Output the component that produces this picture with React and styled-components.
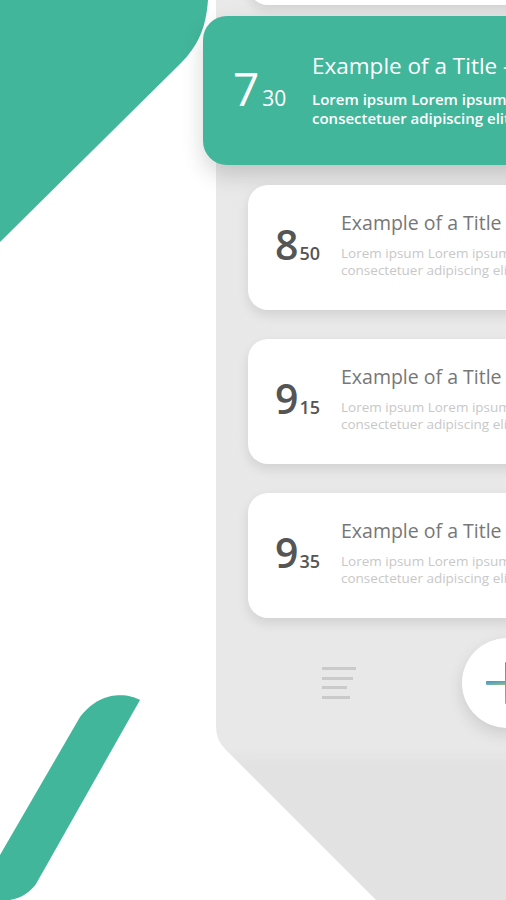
import React from 'react';
import styled, { createGlobalStyle } from 'styled-components';

const GlobalStyle = createGlobalStyle`
  html, body {
    margin: 0;
    padding: 0;
    background: #ffffff;
  }
  body {
    font-family: "Open Sans", "Liberation Sans", sans-serif;
  }
`;

const Screen = styled.div`
  position: relative;
  width: 506px;
  height: 900px;
  overflow: hidden;
  background: #ffffff;
  display: flex;
`;

const Decor = styled.svg`
  position: absolute;
  left: 0;
  top: 0;
  pointer-events: none;
`;

const Panel = styled.div`
  position: relative;
  margin-left: 216px;
  width: 420px;
  height: 900px;
  flex-shrink: 0;
  padding-left: 32px;
  box-sizing: border-box;
  display: flex;
  flex-direction: column;

  &::before {
    content: '';
    position: absolute;
    inset: 0;
    background: linear-gradient(to bottom, #e9e9e9 0, #e8e8e8 748px, #e2e2e2 766px);
    clip-path: path('M0 0 H420 V900 H160 L9 749 Q0 740 0 726 Z');
  }
`;

const List = styled.div`
  position: relative;
  display: flex;
  flex-direction: column;
  gap: 29px;
  margin-top: -120px;
`;

const Card = styled.div`
  flex-shrink: 0;
  box-sizing: border-box;
  display: flex;
  align-items: center;
  height: ${(p) => (p.$active ? 149 : 125)}px;
  margin: ${(p) => (p.$active ? '-18px 0 -9px -45px' : '0')};
  padding: 0 0 6px ${(p) => (p.$active ? 30 : 27)}px;
  border-radius: ${(p) => (p.$active ? 24 : 20)}px;
  background: ${(p) => (p.$active ? '#42b69b' : '#ffffff')};
  box-shadow: ${(p) =>
    p.$active
      ? '0 10px 22px rgba(0, 0, 0, 0.16)'
      : '0 5px 12px rgba(0, 0, 0, 0.1)'};
  white-space: nowrap;
  overflow: hidden;
`;

const Time = styled.div`
  flex-shrink: 0;
  width: ${(p) => (p.$active ? 79 : 66)}px;
  display: flex;
  align-items: baseline;
  color: ${(p) => (p.$active ? '#ffffff' : '#555555')};

  .hour {
    font-size: ${(p) => (p.$active ? 46 : 41)}px;
    font-weight: ${(p) => (p.$active ? 400 : 600)};
    line-height: 1;
  }

  .min {
    margin-left: ${(p) => (p.$active ? 3 : 1)}px;
    font-size: ${(p) => (p.$active ? 21 : 18)}px;
    font-weight: ${(p) => (p.$active ? 400 : 600)};
    line-height: 1;
  }
`;

const Text = styled.div`
  display: flex;
  flex-direction: column;
  padding-top: ${(p) => (p.$active ? 4 : 0)}px;
`;

const Title = styled.div`
  font-size: ${(p) => (p.$active ? 22.5 : 19.5)}px;
  line-height: 1.3;
  color: ${(p) => (p.$active ? '#ffffff' : '#777777')};
`;

const Body = styled.div`
  margin-top: 9px;
  font-size: ${(p) => (p.$active ? 15 : 13.5)}px;
  font-weight: ${(p) => (p.$active ? 600 : 400)};
  line-height: ${(p) => (p.$active ? 19 : 17)}px;
  color: ${(p) => (p.$active ? '#ffffff' : '#c8c8c8')};
`;

const BottomBar = styled.div`
  position: relative;
  display: flex;
  align-items: center;
  gap: 106px;
  margin-top: 20px;
  padding-left: 74px;
`;

const MenuIcon = styled.div`
  width: 34px;
  display: flex;
  flex-direction: column;
  gap: 6.5px;

  span {
    display: block;
    height: 3px;
    background: #cacaca;
  }
`;

const AddButton = styled.button`
  width: 90px;
  height: 90px;
  border: none;
  border-radius: 50%;
  background: #ffffff;
  box-shadow: 0 6px 16px rgba(0, 0, 0, 0.12);
  display: flex;
  align-items: center;
  justify-content: center;
  padding: 0;
  cursor: pointer;
`;

const slots = [
  { h: '7', m: '30', active: true },
  { h: '8', m: '50' },
  { h: '9', m: '15' },
  { h: '9', m: '35' },
];

const ScheduleCard = ({ h, m, active }) => (
  <Card $active={active}>
    <Time $active={active}>
      <span className="hour">{h}</span>
      <span className="min">{m}</span>
    </Time>
    <Text $active={active}>
      <Title $active={active}>Example of a Title - Meeting</Title>
      <Body $active={active}>
        Lorem ipsum Lorem ipsum dolor sit amet,
        <br />
        consectetuer adipiscing elit, sed diam
      </Body>
    </Text>
  </Card>
);

const App = () => {
  return (
    <>
      <GlobalStyle />
      <Screen>
        <Decor width="506" height="900" viewBox="0 0 506 900">
          <path d="M0 0 H208 C206 28 198 46 180 64 L0 242 Z" fill="#42b69b" />
          <path
            d="M140 700 C128 693 100 690 80 717 L0 855 L0 900 L10 900 C22 898 30 892 36 884 Z"
            fill="#42b69b"
          />
        </Decor>
        <Panel>
          <List>
            {/* previous slot, scrolled above the view */}
            <Card />
            {slots.map((s) => (
              <ScheduleCard key={s.h + s.m} {...s} />
            ))}
          </List>
          <BottomBar>
            <MenuIcon>
              <span style={{ width: 34 }} />
              <span style={{ width: 31 }} />
              <span style={{ width: 25 }} />
              <span style={{ width: 28 }} />
            </MenuIcon>
            <AddButton aria-label="Add">
              <svg width="46" height="46" viewBox="0 0 46 46">
                <defs>
                  <linearGradient id="plusGrad" x1="0" y1="0" x2="1" y2="1">
                    <stop offset="0" stopColor="#4a8fd0" />
                    <stop offset="0.5" stopColor="#6fb3a8" />
                    <stop offset="1" stopColor="#f2c23e" />
                  </linearGradient>
                </defs>
                <rect x="2" y="21" width="42" height="4" rx="1" fill="url(#plusGrad)" />
                <rect x="21" y="2" width="4" height="42" rx="1" fill="url(#plusGrad)" />
              </svg>
            </AddButton>
          </BottomBar>
        </Panel>
      </Screen>
    </>
  );
};

export default App;
